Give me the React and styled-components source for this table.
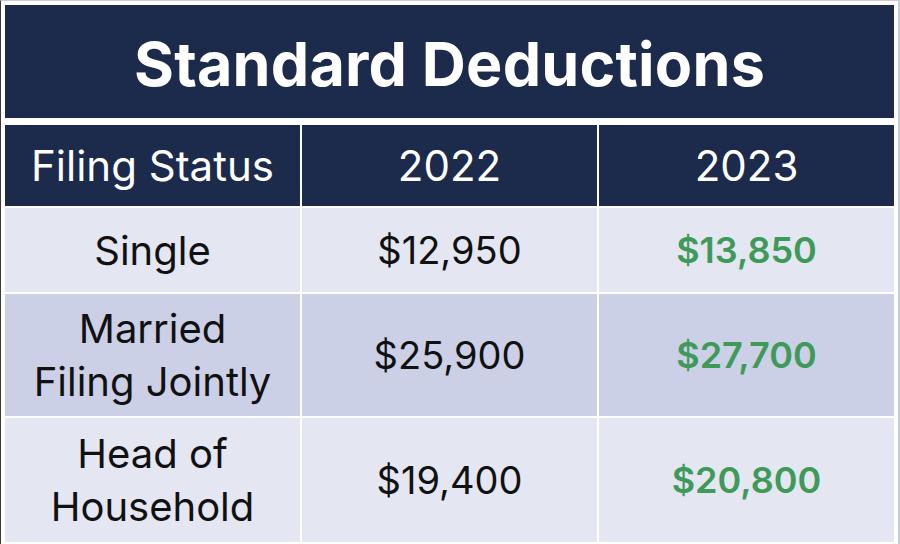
import styled, { createGlobalStyle } from "styled-components";

const GlobalStyle = createGlobalStyle`
  html, body {
    margin: 0;
    padding: 0;
    background: #ffffff;
  }
  body {
    font-family: Inter, "Noto Sans", sans-serif;
  }
`;

const rows = [
  { status: ["Single"], y2022: "$12,950", y2023: "$13,850", shade: false, height: 84 },
  { status: ["Married", "Filing Jointly"], y2022: "$25,900", y2023: "$27,700", shade: true, height: 122 },
  { status: ["Head of", "Household"], y2022: "$19,400", y2023: "$20,800", shade: false, height: 124 },
];

export default function App() {
  return (
    <>
      <GlobalStyle />
      <Frame>
        <Title>Standard Deductions</Title>
        <Table>
          <HeadCell>Filing Status</HeadCell>
          <HeadCell>2022</HeadCell>
          <HeadCell>2023</HeadCell>
          {rows.map((row) => (
            <Row key={row.y2022}>
              <Cell shade={row.shade} h={row.height}>
                <span>
                  {row.status.map((line) => (
                    <Line key={line}>{line}</Line>
                  ))}
                </span>
              </Cell>
              <Cell shade={row.shade} h={row.height}>
                <Amount>{row.y2022}</Amount>
              </Cell>
              <Cell shade={row.shade} h={row.height}>
                <Amount green>{row.y2023}</Amount>
              </Cell>
            </Row>
          ))}
        </Table>
      </Frame>
    </>
  );
}

const Frame = styled.div`
  width: 900px;
  height: 544px;
  box-sizing: border-box;
  padding: 4px 4px 0 4px;
  border-left: 1px solid #3a3a3a;
  border-top: 1px solid #c9ccd4;
  border-right: 2px solid #c9ccd4;
  display: flex;
  flex-direction: column;
  overflow: hidden;
`;

const Title = styled.div`
  height: 113px;
  flex: none;
  background: #1c2a4b;
  color: #ffffff;
  display: flex;
  align-items: center;
  justify-content: center;
  font-size: 61px;
  font-weight: 700;
  letter-spacing: 0.2px;
  padding-top: 4px;
  box-sizing: border-box;
`;

const Table = styled.div`
  margin-top: 7px;
  display: grid;
  grid-template-columns: repeat(3, 1fr);
  column-gap: 2px;
  row-gap: 2px;
`;

const Row = styled.div`
  display: contents;
`;

const HeadCell = styled.div`
  height: 81px;
  background: #1c2a4b;
  color: #ffffff;
  display: flex;
  align-items: center;
  justify-content: center;
  font-size: 42px;
  font-weight: 400;
`;

const Cell = styled.div`
  height: ${(p) => p.h}px;
  background: ${(p) => (p.shade ? "#cbd0e7" : "#e4e6f2")};
  color: #111111;
  display: flex;
  align-items: center;
  justify-content: center;
  text-align: center;
  font-size: 40px;
  line-height: 53px;
`;

const Line = styled.div``;

const Amount = styled.span`
  font-size: ${(p) => (p.green ? "36px" : "38px")};
  color: ${(p) => (p.green ? "#3f9a5a" : "#111111")};
  font-weight: ${(p) => (p.green ? 600 : 400)};
`;
